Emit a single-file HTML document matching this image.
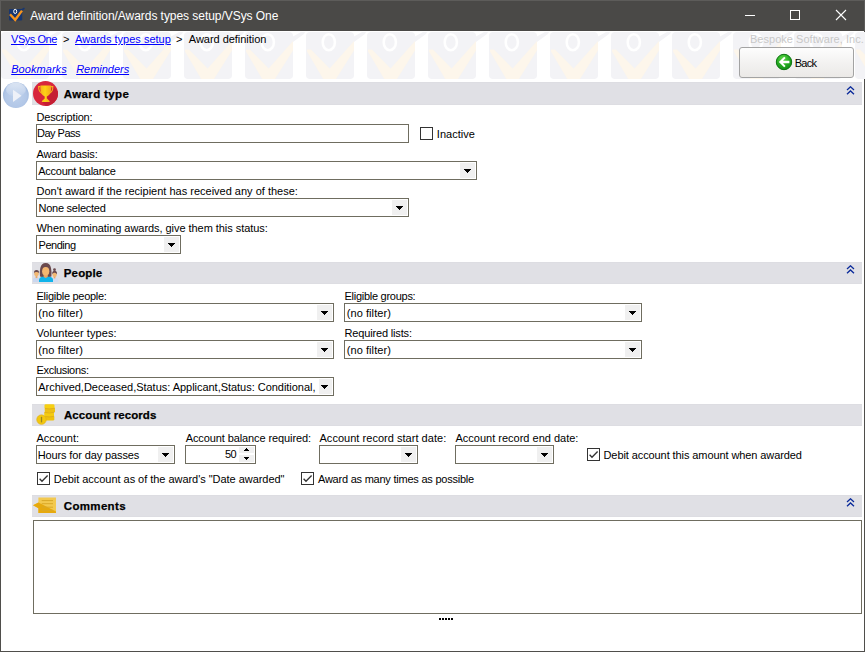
<!DOCTYPE html>
<html lang="en">
<head>
<meta charset="utf-8">
<title>Award definition/Awards types setup/VSys One</title>
<style>
html,body{margin:0;padding:0;}
body{width:865px;height:652px;overflow:hidden;background:#fff;position:relative;
  font-family:"Liberation Sans",sans-serif;font-size:11px;color:#000;}
#win{position:absolute;left:0;top:0;width:863px;height:651px;border:1px solid #4f4e4b;border-top:0;background:#fff;}
#titlebar{position:absolute;left:0;top:0;width:865px;height:31px;background:#4a4947;box-shadow:inset 1px 1px 0 #5d5c5a, inset -1px 0 0 #5d5c5a;}
.t{position:absolute;white-space:nowrap;line-height:13px;height:13px;}
.b{font-weight:bold;font-size:11.5px;-webkit-text-stroke:0.25px #000;}
.lnk{color:#0000ff;text-decoration:underline;}
.it{font-style:italic;}
.bar{position:absolute;left:32px;width:830px;height:22px;background:#e0e0e5;box-shadow:inset 0 1px 0 #dddde2, inset 0 -1px 0 #dddde2;}
.box{position:absolute;height:17px;border:1px solid #6f6d60;background:#fff;}
.dd{position:absolute;width:15px;height:15px;background:
 linear-gradient(#000,#000) 4px 6px/7px 1px no-repeat,
 linear-gradient(#000,#000) 5px 7px/5px 1px no-repeat,
 linear-gradient(#000,#000) 6px 8px/3px 1px no-repeat,
 linear-gradient(#000,#000) 7px 9px/1px 1px no-repeat, #f0f0f0;}
.cb{position:absolute;width:11px;height:11px;border:1px solid #333;background:#fff;}
.abs{position:absolute;}
</style>
</head>
<body>
<div id="win"></div>
<div id="titlebar"></div>

<!-- header watermark -->
<svg class="abs" style="left:0;top:31px" width="865" height="51" viewBox="0 31 865 51">
  <defs>
    <pattern id="wm" x="1" y="32" width="61" height="61" patternUnits="userSpaceOnUse">
      <rect x="0" y="0" width="48" height="47" rx="4" fill="#f3f3f6"/>
      <path d="M48 4.500 L56 0 L60 0 L59 2 L48 10 Z" fill="#f3f3f6"/>
      <path d="M1 17.500 L5 17.500 L23.600 36.400 L48 9 L48 18.500 L30 47 L17.200 47 L1 19.500 Z" fill="#fdf6eb"/>
      <ellipse cx="22.800" cy="10.200" rx="6.100" ry="8" fill="none" stroke="#fff" stroke-width="2.600"/>
    </pattern>
  </defs>
  <rect x="0" y="32" width="865" height="47" fill="url(#wm)"/>
</svg>

<!-- title bar content -->
<svg class="abs" style="left:8px;top:7px" width="18" height="16" viewBox="0 0 18 16">
  <rect x="1" y="2" width="13.200" height="11.600" rx="1" fill="#18366f"/>
  <path d="M13 3.200 L16.500 1.300" stroke="#18366f" stroke-width="1.700"/>
  <path d="M2 7.300 L7.200 12.800 L14 3.600" fill="none" stroke="#f7941d" stroke-width="2.400"/>
  <ellipse cx="7.200" cy="4.400" rx="1.500" ry="2.100" fill="none" stroke="#fff" stroke-width="1"/>
</svg>
<span class="t" id="ttl" style="left:30.2px;top:9px;font-size:12px;color:#fff;line-height:14px;height:14px;letter-spacing:-0.05px">Award definition/Awards types setup/VSys One</span>
<svg class="abs" style="left:740px;top:5px" width="120" height="22" viewBox="740 5 120 22">
  <path d="M745 15.5 H755" stroke="#fff" stroke-width="1"/>
  <rect x="790.5" y="10.5" width="9" height="9" fill="none" stroke="#fff" stroke-width="1"/>
  <path d="M836 10 L846 20 M846 10 L836 20" stroke="#fff" stroke-width="1.1"/>
</svg>

<!-- breadcrumbs -->
<span class="t lnk" style="left:11px;top:33px;letter-spacing:-0.45px">VSys One</span>
<span class="t" style="left:63px;top:33px">&gt;</span>
<span class="t lnk" style="left:75px;top:33px">Awards types setup</span>
<span class="t" style="left:176px;top:33px">&gt;</span>
<span class="t" style="left:188.8px;top:33px;letter-spacing:-0.03px">Award definition</span>
<span class="t lnk it" style="left:11.2px;top:63px;letter-spacing:0.06px">Bookmarks</span>
<span class="t lnk it" style="left:76.2px;top:63px;letter-spacing:-0.03px">Reminders</span>
<span class="t" style="left:750px;top:33px;color:#c8c8c8;letter-spacing:0.03px">Bespoke Software, Inc.</span>

<!-- back button -->
<div class="abs" style="left:739px;top:47px;width:113px;height:29px;border:1px solid #a3a3a3;border-radius:3px;background:linear-gradient(#fdfdfd,#f3f2f1 50%,#ebe9e7);"></div>
<svg class="abs" style="left:775px;top:53px" width="18" height="18" viewBox="0 0 18 18">
  <defs><radialGradient id="gb" cx="0.420" cy="0.300" r="0.750"><stop offset="0" stop-color="#63d94a"/><stop offset="0.550" stop-color="#25ab22"/><stop offset="1" stop-color="#0f8a14"/></radialGradient></defs>
  <circle cx="9" cy="9" r="7.700" fill="url(#gb)" stroke="#0b740f" stroke-width="1"/>
  <path d="M3.800 9 L9.200 3.700 L10.600 5.100 L8 7.800 H14.400 V10.200 H8 L10.600 12.900 L9.200 14.300 Z" fill="#fff"/>
</svg>
<span class="t" style="left:794.7px;top:57px;letter-spacing:-0.75px">Back</span>

<!-- section 1 -->
<div class="bar" style="top:82px;height:23px"></div>
<svg class="abs" style="left:2px;top:81px" width="28" height="28" viewBox="0 0 28 28">
  <defs>
    <radialGradient id="pg" cx="0.500" cy="0.550" r="0.550"><stop offset="0" stop-color="#bed1ec"/><stop offset="0.750" stop-color="#b2c7e7"/><stop offset="1" stop-color="#9fb8dd"/></radialGradient>
    <linearGradient id="pgl" x1="0" x2="0" y1="0" y2="1"><stop offset="0" stop-color="#fff" stop-opacity="0.600"/><stop offset="1" stop-color="#fff" stop-opacity="0.050"/></linearGradient>
  </defs>
  <circle cx="13.900" cy="14.100" r="12.900" fill="url(#pg)"/>
  <ellipse cx="13.900" cy="8.600" rx="10" ry="7" fill="url(#pgl)"/>
  <path d="M11 8.700 L19.600 14.800 L11 21 Z" fill="#eef1f8"/>
</svg>
<svg class="abs" style="left:33px;top:81px" width="26" height="26" viewBox="33 81 26 26">
  <defs>
    <clipPath id="tc"><circle cx="45.500" cy="93.500" r="12.500"/></clipPath>
    <linearGradient id="tg" x1="0" x2="1" y1="0" y2="0"><stop offset="0" stop-color="#f8b21c"/><stop offset="0.450" stop-color="#fcd317"/><stop offset="0.550" stop-color="#fbc815"/><stop offset="1" stop-color="#f6a51b"/></linearGradient>
  </defs>
  <circle cx="45.500" cy="93.500" r="12.500" fill="#d8263c"/>
  <path clip-path="url(#tc)" d="M52.500 86 L60 93.500 V108 H48 L42 102 H49.600 L47 97 Q51 93 52.500 86 Z" fill="#c51e34"/>
  <path d="M40.400 85.400 H51.100 V89 Q51.100 94.500 46.800 96.600 V98.400 L49.600 101 V102 H41.900 V101 L44.700 98.400 V96.600 Q40.400 94.500 40.400 89 Z" fill="url(#tg)"/>
  <path d="M40.400 86.600 H38.700 Q38.400 91.500 42 93.300 M51.100 86.600 H52.800 Q53.100 91.500 49.500 93.300" fill="none" stroke="#f8b21c" stroke-width="1.100"/>
</svg>
<span class="t b" style="left:63.8px;top:88px;letter-spacing:0.36px">Award type</span>
<svg class="abs chev" style="left:846px;top:86px" width="9" height="9" viewBox="0 0 9 9"><path d="M1 4 L4.500 0.8 L8 4 M1 8.200 L4.500 5 L8 8.200" fill="none" stroke="#0a2a9a" stroke-width="1.3"/></svg>

<span class="t" style="left:36.5px;top:111px;letter-spacing:-0.18px">Description:</span>
<div class="box" style="left:36px;top:124px;width:371px"></div>
<span class="t" style="left:37px;top:127px;letter-spacing:-0.5px">Day Pass</span>
<div class="cb" style="left:420px;top:127px"></div>
<span class="t" style="left:436.8px;top:128px;letter-spacing:0.04px">Inactive</span>

<span class="t" style="left:36.5px;top:148px;letter-spacing:-0.14px">Award basis:</span>
<div class="box" style="left:36px;top:161px;width:439px"></div>
<div class="dd" style="left:460px;top:163px"></div>
<span class="t" style="left:38.3px;top:165px;letter-spacing:-0.27px">Account balance</span>

<span class="t" style="left:36.5px;top:185px">Don't award if the recipient has received any of these:</span>
<div class="box" style="left:36px;top:198px;width:371px"></div>
<div class="dd" style="left:392px;top:200px"></div>
<span class="t" style="left:38.5px;top:202px;letter-spacing:-0.25px">None selected</span>

<span class="t" style="left:36.5px;top:222px;letter-spacing:-0.05px">When nominating awards, give them this status:</span>
<div class="box" style="left:36px;top:235px;width:143px"></div>
<div class="dd" style="left:164px;top:237px"></div>
<span class="t" style="left:38.5px;top:239px;letter-spacing:-0.46px">Pending</span>

<!-- section 2 -->
<div class="bar" style="top:262px"></div>
<svg class="abs" style="left:32px;top:262px" width="28" height="22" viewBox="32 262 28 22">
  <!-- left man -->
  <path d="M33 282 V279.500 Q33 277.800 35 277.500 H38 Q39.500 277.800 39.500 279.500 V282 Z" fill="#cbd7ee"/>
  <rect x="35.600" y="275.500" width="1.800" height="2.600" fill="#eaa968"/>
  <ellipse cx="36.500" cy="273.600" rx="2.300" ry="2.700" fill="#f2b872"/>
  <path d="M34 273.200 Q33.800 270 36.500 270 Q39.300 270 39 273 Q38 271.800 36 272 Q34.600 272 34 273.200 Z" fill="#6b4a4e"/>
  <!-- right woman -->
  <path d="M52 282 V280 Q52 278.300 53.500 278 H56.500 Q58.200 278.300 58.200 280 V282 Z" fill="#d3dcf0"/>
  <rect x="53.700" y="276" width="1.700" height="2.400" fill="#eaa968"/>
  <ellipse cx="54.600" cy="274.400" rx="2.200" ry="2.600" fill="#f2b872"/>
  <circle cx="54.500" cy="269.700" r="1.400" fill="#6b4a4e"/>
  <path d="M52.200 274.300 Q51.800 270.800 54.600 270.800 Q57.400 270.800 57 274.300 Q56 272.600 54.500 272.800 Q53 272.600 52.200 274.300 Z" fill="#6b4a4e"/>
  <!-- main woman -->
  <path d="M40 276.500 Q39.500 271 40.300 268 Q41.500 263 45.700 263 Q50 263 51 268 Q51.800 271 51.400 276.500 Q48 277.500 45.700 277.500 Q43 277.500 40 276.500 Z" fill="#6b4a4e"/>
  <path d="M39 282 V279.500 Q39.200 277.300 42 276.800 H49.500 Q52.800 277.300 53 279.500 V282 Z" fill="#10b3ea"/>
  <path d="M43.600 274.500 H47.800 V276.800 Q45.700 279 43.600 276.800 Z" fill="#eaa560"/>
  <ellipse cx="45.700" cy="271.200" rx="3.600" ry="4.300" fill="#f3b670"/>
</svg>
<span class="t b" style="left:63.8px;top:267px;letter-spacing:0.15px">People</span>
<svg class="abs chev" style="left:846px;top:265px" width="9" height="9" viewBox="0 0 9 9"><path d="M1 4 L4.500 0.8 L8 4 M1 8.200 L4.500 5 L8 8.200" fill="none" stroke="#0a2a9a" stroke-width="1.3"/></svg>

<span class="t" style="left:36.5px;top:290px;letter-spacing:-0.28px">Eligible people:</span>
<div class="box" style="left:36px;top:303px;width:296px"></div>
<div class="dd" style="left:317px;top:305px"></div>
<span class="t" style="left:38.3px;top:307px;letter-spacing:0.12px">(no filter)</span>
<span class="t" style="left:344.5px;top:290px;letter-spacing:-0.27px">Eligible groups:</span>
<div class="box" style="left:344px;top:303px;width:296px"></div>
<div class="dd" style="left:625px;top:305px"></div>
<span class="t" style="left:346.7px;top:307px;letter-spacing:0.08px">(no filter)</span>

<span class="t" style="left:36.5px;top:327px;letter-spacing:0.08px">Volunteer types:</span>
<div class="box" style="left:36px;top:340px;width:296px"></div>
<div class="dd" style="left:317px;top:342px"></div>
<span class="t" style="left:38.3px;top:344px;letter-spacing:0.12px">(no filter)</span>
<span class="t" style="left:344.5px;top:327px;letter-spacing:-0.16px">Required lists:</span>
<div class="box" style="left:344px;top:340px;width:296px"></div>
<div class="dd" style="left:625px;top:342px"></div>
<span class="t" style="left:346.7px;top:344px;letter-spacing:0.08px">(no filter)</span>

<span class="t" style="left:36.5px;top:364px;letter-spacing:-0.32px">Exclusions:</span>
<div class="box" style="left:36px;top:377px;width:296px"></div>
<div class="dd" style="left:317px;top:379px"></div><div class="abs" style="left:316px;top:379px;width:3px;height:15px;background:#fff"></div>
<span class="t" style="left:38.3px;top:381px;letter-spacing:-0.03px">Archived,Deceased,Status: Applicant,Status: Conditional,</span>

<!-- section 3 -->
<div class="bar" style="top:404px"></div>
<svg class="abs" style="left:32px;top:404px" width="28" height="22" viewBox="32 404 28 22">
  <rect x="44" y="416" width="10.300" height="4.600" rx="1.300" fill="#efc20f"/>
  <rect x="44.300" y="412" width="9.700" height="4.600" rx="1.300" fill="#f5cc10"/>
  <rect x="44.800" y="408" width="10.200" height="4.600" rx="1.300" fill="#eec114"/>
  <rect x="44.500" y="404.300" width="10" height="4.400" rx="1.300" fill="#f7d012"/>
  <path d="M44.800 408.400 Q49.500 409.600 55 408.200 M44.300 412.400 Q49.500 413.600 54.200 412.300 M44 416.400 Q49.500 417.600 54.200 416.300" fill="none" stroke="#dcaa1c" stroke-width="0.800"/>
  <circle cx="41.500" cy="419.600" r="4.700" fill="#f3c80f" stroke="#e2b417" stroke-width="0.800"/>
  <path d="M41.500 416.800 V422.400" stroke="#9a8524" stroke-width="1.300"/>
</svg>
<span class="t b" style="left:64px;top:409px;letter-spacing:0.07px">Account records</span>

<span class="t" style="left:36.5px;top:432px;letter-spacing:-0.04px">Account:</span>
<div class="box" style="left:36px;top:445px;width:137px"></div>
<div class="dd" style="left:158px;top:447px"></div>
<span class="t" style="left:37.7px;top:449px;letter-spacing:-0.12px">Hours for day passes</span>

<span class="t" style="left:185.7px;top:432px;letter-spacing:-0.1px">Account balance required:</span>
<div class="box" style="left:185px;top:445px;width:69px"></div>
<div class="abs" style="left:239px;top:447px;width:15px;height:6px;background:
 linear-gradient(#000,#000) 7px 1px/1px 1px no-repeat,
 linear-gradient(#000,#000) 6px 2px/3px 1px no-repeat,
 linear-gradient(#000,#000) 5px 3px/5px 1px no-repeat, #f0f0f0"></div>
<div class="abs" style="left:239px;top:455px;width:15px;height:7px;background:
 linear-gradient(#000,#000) 5px 2px/5px 1px no-repeat,
 linear-gradient(#000,#000) 6px 3px/3px 1px no-repeat,
 linear-gradient(#000,#000) 7px 4px/1px 1px no-repeat, #f0f0f0"></div>
<span class="t" style="left:225px;top:448px;letter-spacing:-0.7px">50</span>

<span class="t" style="left:319.5px;top:432px;letter-spacing:0.03px">Account record start date:</span>
<div class="box" style="left:319px;top:445px;width:97px"></div>
<div class="dd" style="left:401px;top:447px"></div>

<span class="t" style="left:455.5px;top:432px">Account record end date:</span>
<div class="box" style="left:455px;top:445px;width:97px"></div>
<div class="dd" style="left:537px;top:447px"></div>

<div class="cb" style="left:587px;top:448px"><svg width="11" height="11" viewBox="1 1 11 11" style="display:block"><path d="M2.6 6.7 L5 9.3 L10.6 3.5" fill="none" stroke="#333" stroke-width="1.3"/></svg></div>
<span class="t" style="left:603.5px;top:449px;letter-spacing:-0.09px">Debit account this amount when awarded</span>

<div class="cb" style="left:37px;top:472px"><svg width="11" height="11" viewBox="1 1 11 11" style="display:block"><path d="M2.6 6.7 L5 9.3 L10.6 3.5" fill="none" stroke="#333" stroke-width="1.3"/></svg></div>
<span class="t" style="left:53.8px;top:473px;letter-spacing:-0.04px">Debit account as of the award's "Date awarded"</span>
<div class="cb" style="left:301px;top:472px"><svg width="11" height="11" viewBox="1 1 11 11" style="display:block"><path d="M2.6 6.7 L5 9.3 L10.6 3.5" fill="none" stroke="#333" stroke-width="1.3"/></svg></div>
<span class="t" style="left:318px;top:473px;letter-spacing:-0.23px">Award as many times as possible</span>

<!-- section 4 -->
<div class="bar" style="top:495px"></div>
<svg class="abs" style="left:32px;top:495px" width="28" height="22" viewBox="32 495 28 22">
  <path d="M38.400 497.400 H56 V512.900 H38.400 V508.300 L33 505.300 L38.400 502.400 Z" fill="#f3c94f"/>
  <path d="M33 505.300 L38.400 502.400 L56 511.500 V512.900 H38.400 V508.300 Z" fill="#e6a90e"/>
  <path d="M41.700 500.600 H53 M41.700 503.700 H53 M41.700 507.200 H53 M41.700 510.400 H53" stroke="#d9a828" stroke-width="1"/>
</svg>
<span class="t b" style="left:63.8px;top:500px;letter-spacing:0.33px">Comments</span>
<svg class="abs chev" style="left:846px;top:498px" width="9" height="9" viewBox="0 0 9 9"><path d="M1 4 L4.500 0.8 L8 4 M1 8.200 L4.500 5 L8 8.200" fill="none" stroke="#0a2a9a" stroke-width="1.3"/></svg>
<div class="abs" style="left:33px;top:520px;width:827px;height:92px;border:1px solid #6f6d60;background:#fff"></div>
<svg class="abs" style="left:439px;top:618px" width="14" height="2" viewBox="0 0 14 2"><path d="M0 0h2v2h-2zM3 0h2v2h-2zM6 0h2v2h-2zM9 0h2v2h-2zM12 0h2v2h-2z" fill="#000"/></svg>
</body>
</html>
